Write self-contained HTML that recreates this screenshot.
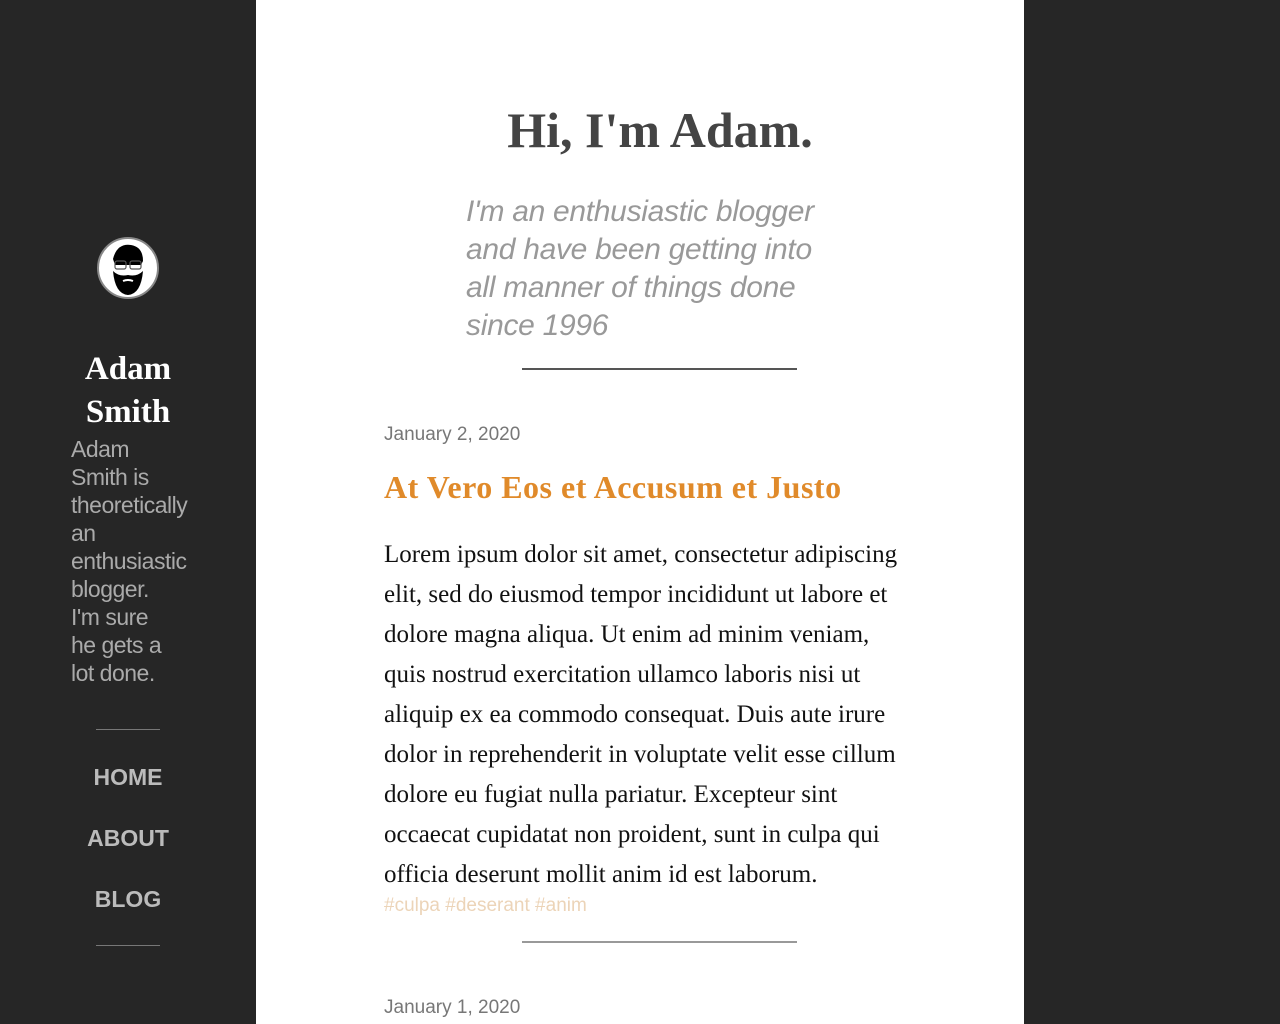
<!DOCTYPE html>
<html><head><meta charset="utf-8"><style>
body{margin:0;background:#262626;width:1280px;height:1024px;overflow:hidden;position:relative;font-family:"Liberation Sans",sans-serif}
.side{position:absolute;left:0;top:0;width:256px;height:1024px;background:#262626}
.main{position:absolute;left:256px;top:0;width:768px;height:1024px;background:#fff}
.av{position:absolute;left:97px;top:237px;width:58px;height:58px;border-radius:50%;background:#fff;border:2px solid #888;overflow:hidden}
.name{position:absolute;left:0;width:256px;top:348px;text-align:center;color:#fff;font-family:"Liberation Serif",serif;font-weight:bold;font-size:33px;line-height:43px}
.desc{position:absolute;left:71px;top:435px;width:180px;color:#aaa;font-size:23px;line-height:28px;letter-spacing:-0.5px;white-space:nowrap}
.hr1{position:absolute;left:96px;width:64px;height:1px;background:#777}
.nav{position:absolute;left:0;width:256px;text-align:center;color:#bbb;font-weight:bold;font-size:23px}
h1{position:absolute;left:276px;width:768px;top:100px;margin:0;text-align:center;color:#444;font-family:"Liberation Serif",serif;font-size:50px;line-height:60px}
.intro{position:absolute;left:466px;top:193px;width:420px;color:#999;font-style:italic;font-size:30px;line-height:38px;letter-spacing:-0.3px;white-space:nowrap}
.sep{position:absolute;left:522px;width:275px;height:2px;background:#555}
.date{position:absolute;left:384px;color:#777;font-size:19px}
.title{position:absolute;left:384px;top:469px;color:#e08a2a;font-family:"Liberation Serif",serif;font-weight:bold;font-size:32px;letter-spacing:0.5px}
.body{position:absolute;left:384px;top:535px;width:600px;color:#111;font-family:"Liberation Serif",serif;font-size:25px;line-height:40px;white-space:nowrap}
.tags{position:absolute;left:384px;top:895px;color:#ecd4b8;font-size:19px}
</style></head><body>
<div class="side"></div><div class="main"></div>
<div class="av"><svg width="58" height="58" viewBox="0 0 58 58"><path d="M14 20 Q18 4 32 6 Q44 8 44 22 L42 26 L16 26Z" fill="#000"/><path d="M14 32 Q16 55 29 56 Q42 55 44 32 Q38 38 29 36 Q20 38 14 32Z" fill="#000"/><rect x="16" y="22" width="11" height="8" rx="2" fill="none" stroke="#555" stroke-width="1.2"/><rect x="31" y="22" width="11" height="8" rx="2" fill="none" stroke="#555" stroke-width="1.2"/><path d="M24 42 Q29 40 34 42" stroke="#fff" stroke-width="2" fill="none"/></svg></div>
<div class="name">Adam<br>Smith</div>
<div class="desc">Adam<br>Smith is<br>theoretically<br>an<br>enthusiastic<br>blogger.<br>I'm sure<br>he gets a<br>lot done.</div>
<div class="hr1" style="top:729px"></div>
<div class="nav" style="top:764px">HOME</div>
<div class="nav" style="top:825px">ABOUT</div>
<div class="nav" style="top:886px">BLOG</div>
<div class="hr1" style="top:945px"></div>
<h1>Hi, I'm Adam.</h1>
<div class="intro">I'm an enthusiastic blogger<br>and have been getting into<br>all manner of things done<br>since 1996</div>
<div class="sep" style="top:368px"></div>
<div class="date" style="top:424px">January 2, 2020</div>
<div class="title">At Vero Eos et Accusum et Justo</div>
<div class="body">Lorem ipsum dolor sit amet, consectetur adipiscing<br>elit, sed do eiusmod tempor incididunt ut labore et<br>dolore magna aliqua. Ut enim ad minim veniam,<br>quis nostrud exercitation ullamco laboris nisi ut<br>aliquip ex ea commodo consequat. Duis aute irure<br>dolor in reprehenderit in voluptate velit esse cillum<br>dolore eu fugiat nulla pariatur. Excepteur sint<br>occaecat cupidatat non proident, sunt in culpa qui<br>officia deserunt mollit anim id est laborum.</div>
<div class="tags">#culpa #deserant #anim</div>
<div class="sep" style="top:941px;background:#999"></div>
<div class="date" style="top:997px">January 1, 2020</div>
</body></html>
